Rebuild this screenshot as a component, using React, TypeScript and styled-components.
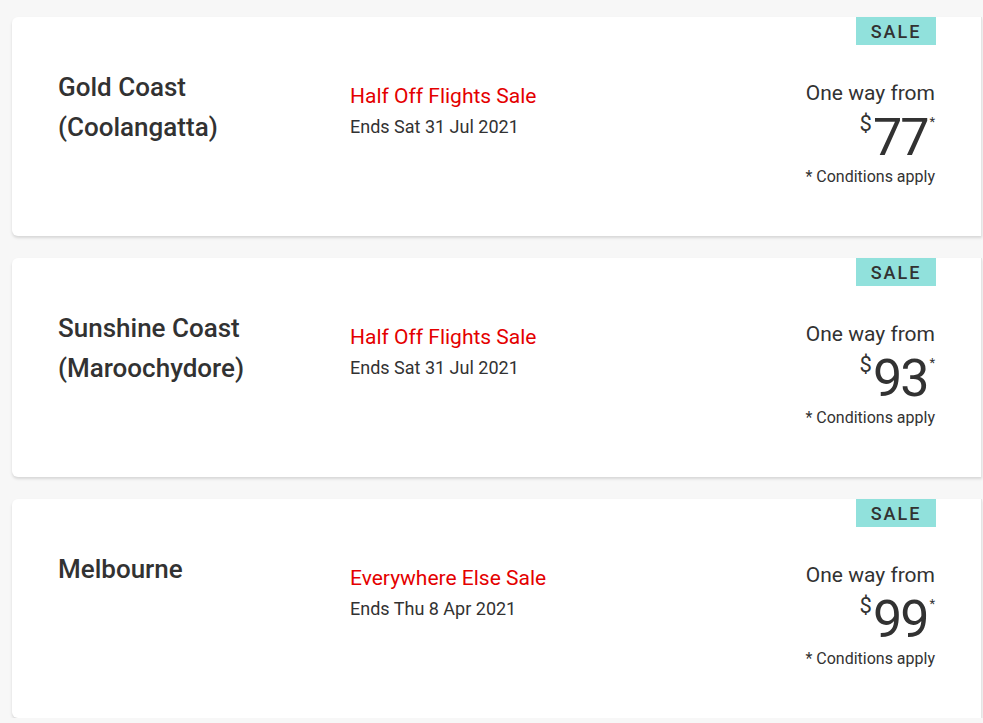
import React from "react";
import styled, { createGlobalStyle } from "styled-components";

const Global = createGlobalStyle`
  html, body { margin: 0; padding: 0; background: #f7f7f7; }
  body { font-family: Roboto, "Liberation Sans", sans-serif; color: #323232; }
`;

const List = styled.div`
  display: flex;
  flex-direction: column;
  gap: 22px;
  padding: 17px 1px 0 12px;
`;

const Card = styled.div`
  position: relative;
  display: grid;
  grid-template-columns: 292px 1fr auto;
  height: 219px;
  box-sizing: border-box;
  padding: 0 46px 0 46px;
  background: #fff;
  border-radius: 6px 0 0 6px;
  box-shadow: 0 2px 3px rgba(0, 0, 0, 0.13);
  border-right: 1px solid #e4e4e4;
`;

const Badge = styled.div`
  position: absolute;
  top: 0;
  right: 45px;
  width: 80px;
  height: 28px;
  display: flex;
  align-items: center;
  justify-content: center;
  background: #91e1dc;
  font-size: 18px;
  font-weight: 500;
  letter-spacing: 2px;
  color: #323232;
`;

const Title = styled.div`
  padding-top: 50px;
  font-size: 26px;
  line-height: 40px;
  font-weight: 500;
  color: #323232;
`;

const Deal = styled.div`
  padding-top: 63px;
  display: flex;
  flex-direction: column;
`;

const DealName = styled.div`
  font-size: 21px;
  line-height: 33px;
  color: #e40000;
`;

const DealEnds = styled.div`
  font-size: 18px;
  line-height: 28px;
  color: #323232;
`;

const PriceBox = styled.div`
  padding-top: 62px;
  display: flex;
  flex-direction: column;
  align-items: flex-end;
`;

const From = styled.div`
  font-size: 21px;
  line-height: 28px;
`;

const Price = styled.div`
  display: flex;
  align-items: flex-start;
  margin-top: 3px;
  font-size: 52px;
  line-height: 56px;
  font-weight: 400;
  letter-spacing: -2px;
  color: #323232;
`;

const Sup = styled.span`
  font-size: 22px;
  line-height: 22px;
  margin-top: 3px;
  margin-right: 1px;
  letter-spacing: 0;
`;

const Star = styled.span`
  font-size: 13px;
  line-height: 13px;
  margin-top: 5px;
  margin-left: 2px;
  letter-spacing: 0;
`;

const Cond = styled.div`
  font-size: 16px;
  line-height: 22px;
`;

const deals = [
  { title: ["Gold Coast", "(Coolangatta)"], name: "Half Off Flights Sale", ends: "Ends Sat 31 Jul 2021", price: 77 },
  { title: ["Sunshine Coast", "(Maroochydore)"], name: "Half Off Flights Sale", ends: "Ends Sat 31 Jul 2021", price: 93 },
  { title: ["Melbourne"], name: "Everywhere Else Sale", ends: "Ends Thu 8 Apr 2021", price: 99 },
];

export default function App() {
  return (
    <>
      <Global />
      <List>
        {deals.map((d) => (
          <Card key={d.price}>
            <Badge>SALE</Badge>
            <Title>
              {d.title.map((t) => (
                <div key={t}>{t}</div>
              ))}
            </Title>
            <Deal>
              <DealName>{d.name}</DealName>
              <DealEnds>{d.ends}</DealEnds>
            </Deal>
            <PriceBox>
              <From>One way from</From>
              <Price>
                <Sup>$</Sup>
                {d.price}
                <Star>*</Star>
              </Price>
              <Cond>* Conditions apply</Cond>
            </PriceBox>
          </Card>
        ))}
      </List>
    </>
  );
}
